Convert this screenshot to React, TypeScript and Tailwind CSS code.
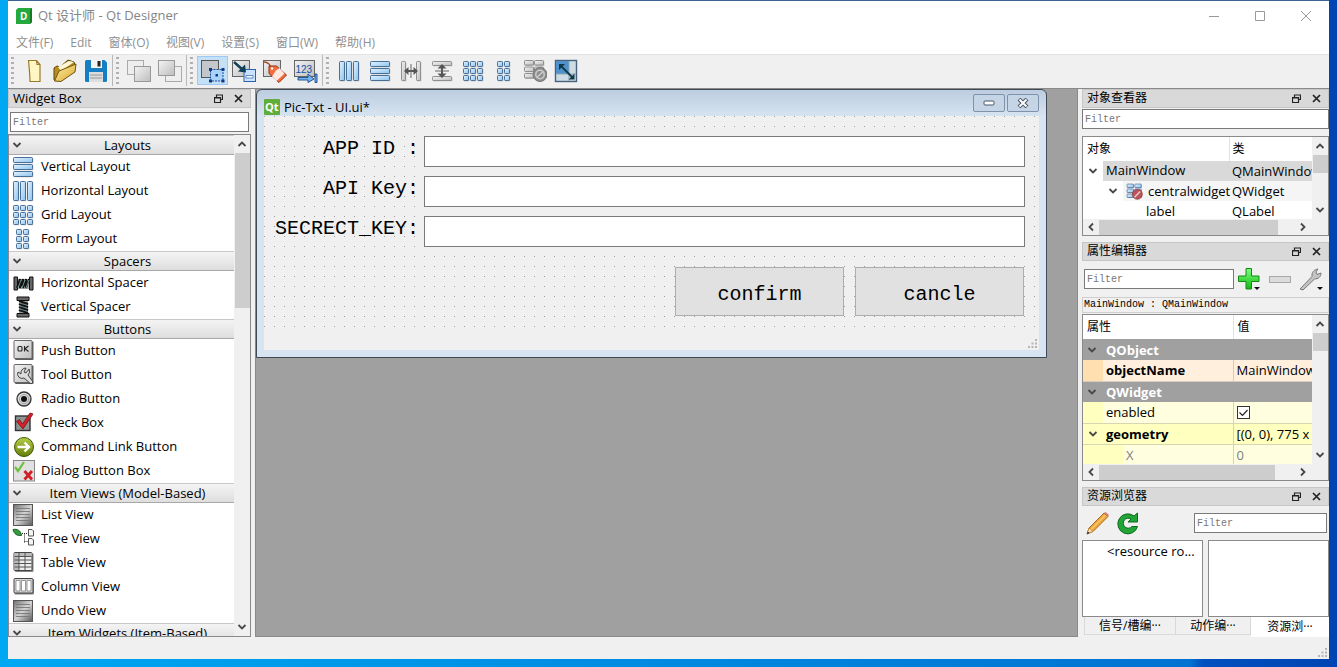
import React from "react";

const UI = "font-['Open_Sans','Noto_Sans_CJK_SC',sans-serif]";
const MONO = "font-['Liberation_Mono','Noto_Sans_CJK_SC',monospace]";

type Kids = { children?: React.ReactNode };

/* ---------- shared icons ---------- */

function Defs() {
  return (
    <svg className="absolute size-0" aria-hidden="true">
      <defs>
        <linearGradient id="bar" x1="0" y1="0" x2="1" y2="1">
          <stop offset="0" stopColor="#e4f3ff" />
          <stop offset="1" stopColor="#8cc3ee" />
        </linearGradient>
        <linearGradient id="gry" x1="0" y1="0" x2="1" y2="1">
          <stop offset="0" stopColor="#f4f4f4" />
          <stop offset="1" stopColor="#bdbdbd" />
        </linearGradient>
        <linearGradient id="gold" x1="0" y1="0" x2="1" y2="1">
          <stop offset="0" stopColor="#fff0a8" />
          <stop offset="1" stopColor="#d9a72c" />
        </linearGradient>
        <linearGradient id="grn" x1="0" y1="0" x2="0" y2="1">
          <stop offset="0" stopColor="#7dff7d" />
          <stop offset="1" stopColor="#14b814" />
        </linearGradient>
        <linearGradient id="olive" x1="0" y1="0" x2="0" y2="1">
          <stop offset="0" stopColor="#b5cf4a" />
          <stop offset="1" stopColor="#647f08" />
        </linearGradient>
        <linearGradient id="dark" x1="0" y1="0" x2="1" y2="1">
          <stop offset="0" stopColor="#6e6e6e" />
          <stop offset="0.5" stopColor="#d5d5d5" />
          <stop offset="1" stopColor="#5a5a5a" />
        </linearGradient>
      </defs>
    </svg>
  );
}

function Icon({ children, size = "size-6" }: Kids & { size?: string }) {
  return (
    <svg viewBox="0 0 24 24" className={`${size} shrink-0`} aria-hidden="true">
      {children}
    </svg>
  );
}

type CellProps = { xs: number[]; ys: number[]; w: number; h: number; gray?: boolean };

function Cells({ xs, ys, w, h, gray }: CellProps) {
  return (
    <g>
      {xs.map((x) =>
        ys.map((y) => (
          <g key={`${x}-${y}`}>
            <rect x={x + 0.7} y={y + 0.7} width={w} height={h} fill="#000" opacity="0.3" />
            <rect x={x} y={y} width={w} height={h} rx="0.8" fill={gray ? "url(#gry)" : "url(#bar)"} stroke={gray ? "#8f8f8f" : "#4a6f96"} />
          </g>
        )),
      )}
    </g>
  );
}

const rows = <Cells xs={[2.5]} ys={[2.5, 9.5, 16.5]} w={19} h={5} />;
const cols = <Cells xs={[2.5, 9.5, 16.5]} ys={[2.5]} w={5} h={19} />;
const grid = <Cells xs={[2.5, 9.5, 16.5]} ys={[2.5, 9.5, 16.5]} w={5} h={5} />;
const formCells = <Cells xs={[5.5, 12.5]} ys={[2.5, 9.5, 16.5]} w={5} h={5} />;

const hSpacer = (
  <g>
    <path d="M6 8h13v10H6z" fill="#444" opacity="0.5" />
    <path d="M3 6h3.500v13H3zM18.500 6H22v13h-3.500z" fill="#666" stroke="#111" />
    <path d="M6 17l3-9v9l3-9v9l3-9v9l3-9" fill="none" stroke="#111" strokeWidth="2" />
    <path d="M7 17l3-8M11 17l3-8M15 17l3-8" stroke="#9ac4c4" strokeWidth="0.7" />
  </g>
);
const vSpacer = (
  <g>
    <path d="M8 6h9v12H8z" fill="#444" opacity="0.5" />
    <path d="M6 2h12v3.500H6zM6 18.500h12V22H6z" fill="#666" stroke="#111" />
    <path d="M8 6l9 3H8l9 3H8l9 3H8l9 3" fill="none" stroke="#111" strokeWidth="2" />
    <path d="M8 8l8 2M8 11l8 2M8 14l8 2" stroke="#9ac4c4" strokeWidth="0.7" />
  </g>
);
const plate = (
  <g>
    <rect x="4" y="2.500" width="18.500" height="18.500" rx="1" fill="#333" opacity="0.8" />
    <rect x="3" y="1.500" width="18" height="18" rx="1" fill="url(#gry)" stroke="#666" />
  </g>
);
const pushIcon = (
  <g>
    {plate}
    <rect x="7" y="7.500" width="4" height="4.500" rx="1" fill="none" stroke="#222" strokeWidth="1.100" />
    <path d="M13.500 7v5.500M17.500 7l-3.500 2.700 3.500 2.800" fill="none" stroke="#222" strokeWidth="1.100" />
  </g>
);
const toolIcon = (
  <g>
    {plate}
    <path d="M15 5a5 5 0 0 0-5 6L7 9a4.500 4.500 0 0 0 6 6l7 6 2-2-5-7a5 5 0 0 0 1-6l-3 4-2-1z" fill="#ddd" stroke="#444" />
  </g>
);
const radioIcon = (
  <g>
    <circle cx="13" cy="12" r="7" fill="url(#gry)" stroke="#333" strokeWidth="1.300" />
    <circle cx="13" cy="12" r="4.600" fill="#ddd" stroke="#777" strokeWidth="0.600" />
    <circle cx="13" cy="12" r="3" fill="#111" />
  </g>
);
const checkIcon = (
  <g>
    <rect x="4.500" y="5" width="14.500" height="14.500" fill="#8b9694" stroke="#333" strokeWidth="1.400" />
    <path d="M5.500 10.500l3-2 3 4.500L19 2l3 1L12 18z" fill="#d3222a" stroke="#7d0c12" strokeWidth="0.800" />
  </g>
);
const linkIcon = (
  <g>
    <circle cx="13" cy="12" r="9.500" fill="url(#olive)" stroke="#435806" />
    <path d="M6.500 12h11M13.500 7.500L18 12l-4.500 4.500" fill="none" stroke="#fff" strokeWidth="2.400" />
  </g>
);
const dialogIcon = (
  <g>
    <rect x="2.500" y="1.500" width="21" height="20.500" fill="#e0e0e0" stroke="#888" />
    <path d="M4 8l3 4 6-9" fill="none" stroke="#6cc03a" strokeWidth="2.200" />
    <path d="M13.500 12l7.500 8.500M21 12l-7.500 8.500" stroke="#d01f28" strokeWidth="2.800" />
  </g>
);
const listIcon = (
  <g>
    <rect x="2.500" y="1.500" width="19" height="21" fill="url(#dark)" stroke="#555" />
    <path d="M5 5.500h14M5 8.500h14M5 11.500h14M5 14.500h14M5 17.500h14" stroke="#777" strokeWidth="0.900" />
  </g>
);
const treeIcon = (
  <g>
    <path d="M2 2.500c4-1 8 1 8.500 6C6 9 3 7 2 2.500z" fill="#2f9e3d" stroke="#123f18" strokeWidth="0.800" />
    <path d="M11 6.500h6M13.500 6.500v9M13.500 14.500h3" stroke="#222" strokeDasharray="1 1" fill="none" />
    <path d="M17.500 2.500h3.500l1.500 1.500v5h-5zM17.500 11.500h3.500l1.500 1.500v5h-5z" fill="#f4f4f4" stroke="#555" />
  </g>
);
const tableIcon = (
  <g>
    <rect x="4" y="2.500" width="18.500" height="18.500" rx="1" fill="#333" opacity="0.600" />
    <rect x="3" y="1.500" width="18" height="18" rx="1" fill="#eee" stroke="#444" />
    <path d="M3.500 2h17v3.500h-17zM3.500 2H8v17H3.500z" fill="#bbb" />
    <path d="M3.500 5.500h17M3.500 9h17M3.500 12.500h17M3.500 16h17M8 2v17M14 2v17" stroke="#555" />
  </g>
);
const columnIcon = (
  <g>
    <rect x="3.500" y="4" width="19.500" height="15.500" rx="1" fill="#333" opacity="0.600" />
    <rect x="3" y="3.500" width="19" height="14.500" rx="1" fill="#d8d8d8" stroke="#444" />
    <path d="M5 5.500h4v10.500H5zM10.500 5.500h4v10.500h-4zM16 5.500h4v10.500h-4z" fill="#fff" stroke="#777" strokeWidth="0.700" />
  </g>
);

const newIcon = (
  <path d="M6.500 1.500h8l3.500 4v17H8c0-6-.8-14-1.500-21zM14.500 1.500l.5 4h3" fill="#fff6c4" stroke="#9a7a28" strokeWidth="1.200" />
);
const openIcon = (
  <g>
    <path d="M1 21V9l3-2 3 1 8-7 6 2 1 3L3 22z" fill="#b98d1c" stroke="#5e4708" />
    <path d="M5 8l11-6 5 1-13 9z" fill="#fdf6d8" />
    <path d="M1.500 22L6 12 23 5l-1 8L8 22.500z" fill="url(#gold)" stroke="#6d5410" />
  </g>
);
const saveIcon = (
  <g>
    <path d="M1 2.500Q1 1 2.500 1h18L23 3.500v18q0 1.500-1.500 1.500h-19Q1 23 1 21.500z" fill="#167fc4" />
    <path d="M7 1h11v8H7z" fill="#f3f3f3" />
    <path d="M13.500 2h3v5.500h-3z" fill="#222" />
    <path d="M5 13h14v10H5z" fill="#ddd" />
    <path d="M6 16h12M6 19h12" stroke="#999" />
  </g>
);
const backIcon = (
  <g>
    <rect x="0.500" y="1.500" width="16" height="14" fill="#eee" stroke="#aaa" />
    <rect x="7.500" y="7.500" width="16" height="15" fill="url(#gry)" stroke="#999" />
  </g>
);
const frontIcon = (
  <g>
    <rect x="7.500" y="7.500" width="16" height="15" fill="#eee" stroke="#aaa" />
    <rect x="0.500" y="1.500" width="16" height="15" fill="url(#gry)" stroke="#999" />
  </g>
);
const widgetsIcon = (
  <g>
    <rect x="0.500" y="1.500" width="17" height="17" fill="#c3c7cc" stroke="#555" />
    <path d="M9.500 10.500H22V22H9.500z" fill="#a9d2fa" stroke="#174e9b" strokeDasharray="2 1" />
    <path d="M8 9h3v3H8zM20.500 9h3v3h-3zM8 20.500h3v3H8zM20.500 20.500h3v3h-3zM14.500 15H17v2.500h-2.500z" fill="#123a80" />
  </g>
);
const signalsIcon = (
  <g>
    <rect x="0.500" y="1.500" width="17" height="16" fill="url(#gry)" stroke="#666" />
    <rect x="12" y="10.500" width="11.500" height="12" fill="#c7e3ff" stroke="#2c63a8" />
    <path d="M14 16.500h7V19h-7z" fill="#fff" stroke="#2c63a8" strokeWidth="0.700" />
    <path d="M2 3l9 8" stroke="#123f58" strokeWidth="2.400" />
    <path d="M14 13.500l-8-1 7-7z" fill="#123f58" />
  </g>
);
const buddyIcon = (
  <g>
    <rect x="0.500" y="1.500" width="17" height="16" fill="url(#gry)" stroke="#666" />
    <path d="M1 3q6 0 7 7" fill="none" stroke="#a34b21" strokeWidth="1.300" />
    <path d="M6 7h7.500l10 9-7.500 7.500L6 14.500z" fill="#f36d3d" stroke="#8f3110" />
    <path d="M13 11.500l3.500-2.500 5 5.500-8 7.500-4.500-4.500z" fill="#fff" opacity="0.850" />
    <circle cx="9" cy="9.500" r="1.200" fill="#fff" />
  </g>
);
const tabOrderIcon = (
  <g>
    <rect x="0.500" y="1.500" width="20" height="16" fill="url(#gry)" stroke="#666" />
    <text x="1.500" y="14" fontSize="10" fill="#174ea6" fontFamily="Liberation Sans, sans-serif">123</text>
    <path d="M4 18.500h10v-3.500l6 5-6 3.500v-2.500H4zM21 15h2v8.500h-2z" fill="#74b7ef" stroke="#16468c" strokeWidth="0.900" />
  </g>
);
const hSplitIcon = (
  <g>
    <Cells gray xs={[2.5, 17.5]} ys={[2.5]} w={4} h={19} />
    <path d="M5 12l4.500-4v3h5V8l4.500 4-4.500 4v-3h-5v3z" fill="#555" />
    <path d="M12 5v14" stroke="#666" />
  </g>
);
const vSplitIcon = (
  <g>
    <Cells gray xs={[2.5]} ys={[2.5, 17.5]} w={19} h={4} />
    <path d="M12 5l4.500 4.500H13v5h3.500L12 19l-4.500-4.500H11v-5H7.500z" fill="#555" />
    <path d="M5 12h14" stroke="#666" />
  </g>
);
const breakIcon = (
  <g>
    <Cells gray xs={[1.5, 11.5]} ys={[1.5, 8, 14.5]} w={9} h={4.5} />
    <circle cx="17" cy="15.500" r="7" fill="#8e8e8e" stroke="#777" />
    <circle cx="17" cy="15.500" r="4.200" fill="none" stroke="#ccc" strokeWidth="1.500" />
    <path d="M14 18.500l6-6" stroke="#ccc" strokeWidth="1.500" />
  </g>
);
const adjustIcon = (
  <g>
    <rect x="1.500" y="1.500" width="21" height="21" fill="#ccdbe4" stroke="#46627c" strokeWidth="1.400" />
    <path d="M2 2h13v13H2z" fill="#4e91cb" />
    <path d="M15 2v20M2 15h20" stroke="#8fa5b5" />
    <path d="M7 7l11 11" stroke="#0e3a4a" strokeWidth="1.800" />
    <path d="M5 5h6l-6 6zM20.500 20.500h-6l6-6z" fill="#0e3a4a" />
  </g>
);

function Chevron({ dir, className = "" }: { dir: "up" | "down" | "left" | "right"; className?: string }) {
  const d = {
    up: "M1.500 7l3.500-3.500L8.500 7",
    down: "M1.500 3l3.500 3.500L8.500 3",
    left: "M7 1.500L3.500 5 7 8.500",
    right: "M3 1.500L6.500 5 3 8.500",
  }[dir];
  return (
    <svg viewBox="0 0 10 10" className={`size-2.5 shrink-0 ${className}`} aria-hidden="true">
      <path d={d} fill="none" stroke="#484848" strokeWidth="1.800" />
    </svg>
  );
}

/* ---------- shared parts ---------- */

function DockTitle({ children, size = "text-[12px]" }: Kids & { size?: string }) {
  return (
    <div className={`flex h-[19px] shrink-0 items-center border border-[#c6c6c6] bg-[#d9d9d9] px-1 pb-px leading-4 text-black ${size}`}>
      <h2 className="flex-1 truncate">{children}</h2>
      <button aria-label="Float" className="flex size-4 items-center justify-center">
        <svg viewBox="0 0 9 9" className="size-[9px]" aria-hidden="true">
          <path d="M2.500 3V1h6v4.500H6.500M.5 3.500h6v5h-6zM.5 4h6M2.500 1h6" fill="none" stroke="#222" strokeWidth="1.200" />
        </svg>
      </button>
      <button aria-label="Close" className="ml-1 flex size-4 items-center justify-center">
        <svg viewBox="0 0 9 9" className="size-[9px]" aria-hidden="true">
          <path d="M1 1l7 7M8 1L1 8" stroke="#222" strokeWidth="1.700" />
        </svg>
      </button>
    </div>
  );
}

function Filter({ label, className = "" }: { label: string; className?: string }) {
  return (
    <input
      aria-label={label}
      placeholder="Filter"
      className={`h-5 min-w-0 border border-[#7a7a7a] bg-white px-0.5 text-[10px] leading-4 outline-none placeholder:text-[#777] ${MONO} ${className}`}
    />
  );
}

function VScroll({ thumb }: { thumb: string }) {
  return (
    <div className="flex w-4 shrink-0 flex-col items-center bg-[#f0f0f0]">
      <Chevron dir="up" className="my-1" />
      <div className={`w-[15px] bg-[#cdcdcd] ${thumb}`} />
      <Chevron dir="down" className="mb-1 mt-auto" />
    </div>
  );
}

function HScroll({ thumb }: { thumb: string }) {
  return (
    <div className="flex h-4 shrink-0 items-center bg-[#f0f0f0] pr-5">
      <Chevron dir="left" className="mx-[3px]" />
      <div className={`h-[15px] bg-[#cdcdcd] ${thumb}`} />
      <Chevron dir="right" className="ml-auto" />
    </div>
  );
}

/* ---------- header ---------- */

function TitleBar() {
  return (
    <header className="flex h-[30px] shrink-0 items-center bg-white pl-2 text-[13px] text-[#868686]">
      <svg viewBox="0 0 16 16" className="mr-1.5 size-4" aria-hidden="true">
        <path d="M2 0h14v14l-2 2H0V2z" fill="#25a83c" />
        <path d="M14 2l2-2v14l-2 2z" fill="#157a28" />
        <text x="4" y="12" fontSize="10" fontWeight="700" fill="#fff" fontFamily="Noto Sans, sans-serif">D</text>
      </svg>
      <h1 className="flex-1">Qt 设计师 - Qt Designer</h1>
      <button aria-label="Minimize" className="flex h-full w-[46px] items-center justify-center">
        <svg viewBox="0 0 12 12" className="size-3" aria-hidden="true"><path d="M1 6.500h10" stroke="#999" /></svg>
      </button>
      <button aria-label="Maximize" className="flex h-full w-[46px] items-center justify-center">
        <svg viewBox="0 0 12 12" className="size-3" aria-hidden="true"><path d="M1.500 1.500h9v9h-9z" fill="none" stroke="#999" /></svg>
      </button>
      <button aria-label="Close window" className="flex h-full w-[46px] items-center justify-center">
        <svg viewBox="0 0 12 12" className="size-3" aria-hidden="true"><path d="M1 1l10 10M11 1L1 11" stroke="#999" /></svg>
      </button>
    </header>
  );
}

const menus = ["文件(F)", "Edit", "窗体(O)", "视图(V)", "设置(S)", "窗口(W)", "帮助(H)"];

function Grip() {
  return <span className="ml-[3px] mr-1 h-7 w-[3px] bg-[linear-gradient(#b0b0b0_2px,transparent_2px)] bg-[length:3px_5px]" />;
}

const toolGroups = [
  [
    { name: "New", icon: newIcon },
    { name: "Open", icon: openIcon },
    { name: "Save", icon: saveIcon },
  ],
  [
    { name: "Send to Back", icon: backIcon },
    { name: "Bring to Front", icon: frontIcon },
  ],
  [
    { name: "Edit Widgets", icon: widgetsIcon, active: true },
    { name: "Edit Signals/Slots", icon: signalsIcon },
    { name: "Edit Buddies", icon: buddyIcon },
    { name: "Edit Tab Order", icon: tabOrderIcon },
  ],
  [
    { name: "Lay Out Horizontally", icon: cols },
    { name: "Lay Out Vertically", icon: rows },
    { name: "Horizontal Splitter", icon: hSplitIcon },
    { name: "Vertical Splitter", icon: vSplitIcon },
    { name: "Grid", icon: grid },
    { name: "Form", icon: formCells },
    { name: "Break Layout", icon: breakIcon },
    { name: "Adjust Size", icon: adjustIcon },
  ],
];

function ToolBar() {
  return (
    <div className="flex h-[34px] shrink-0 items-center border-t border-[#e3e3e3] bg-[#f0f0f0] pb-0.5">
      {toolGroups.map((group) => (
        <div key={group[0].name} className="flex h-[31px] items-center border-r border-[#b8b8b8] pr-px last:border-r-0">
          <Grip />
          {group.map((tool) => (
            <button
              key={tool.name}
              aria-label={tool.name}
              className={`flex h-[29px] w-[31px] items-center justify-center border ${
                "active" in tool ? "border-[#9ccaf2] bg-[#c4e0f7]" : "border-transparent"
              }`}
            >
              <Icon>{tool.icon}</Icon>
            </button>
          ))}
        </div>
      ))}
    </div>
  );
}

/* ---------- widget box ---------- */

const sections = [
  {
    title: "Layouts",
    items: [
      { name: "Vertical Layout", icon: rows },
      { name: "Horizontal Layout", icon: cols },
      { name: "Grid Layout", icon: grid },
      { name: "Form Layout", icon: formCells },
    ],
  },
  {
    title: "Spacers",
    items: [
      { name: "Horizontal Spacer", icon: hSpacer },
      { name: "Vertical Spacer", icon: vSpacer },
    ],
  },
  {
    title: "Buttons",
    items: [
      { name: "Push Button", icon: pushIcon },
      { name: "Tool Button", icon: toolIcon },
      { name: "Radio Button", icon: radioIcon },
      { name: "Check Box", icon: checkIcon },
      { name: "Command Link Button", icon: linkIcon },
      { name: "Dialog Button Box", icon: dialogIcon },
    ],
  },
  {
    title: "Item Views (Model-Based)",
    items: [
      { name: "List View", icon: listIcon },
      { name: "Tree View", icon: treeIcon },
      { name: "Table View", icon: tableIcon },
      { name: "Column View", icon: columnIcon },
      { name: "Undo View", icon: listIcon },
    ],
  },
  { title: "Item Widgets (Item-Based)", items: [] },
];

function WidgetBox() {
  return (
    <aside className="flex w-[243px] shrink-0 flex-col">
      <DockTitle size="text-[13px]">Widget Box</DockTitle>
      <Filter label="Filter widgets" className="mx-0.5 mt-1" />
      <div className="mt-0.5 flex min-h-0 flex-1 border border-[#8a8a8a] bg-white">
        <div className="min-w-0 flex-1 overflow-hidden">
          {sections.map((section) => (
            <section key={section.title}>
              <button className="flex h-5 w-full items-center border-b border-t border-[#a8a8a8] border-t-[#c8c8c8] bg-linear-to-b from-[#f4f4f4] to-[#dedede] px-[3px] text-[13px] leading-4">
                <Chevron dir="down" />
                <span className="flex-1 pl-0.5 text-center">{section.title}</span>
              </button>
              <ul>
                {section.items.map((item) => (
                  <li key={item.name} className="flex h-6 items-center gap-1.5 pl-0.5 text-[13px]">
                    <Icon>{item.icon}</Icon>
                    {item.name}
                  </li>
                ))}
              </ul>
            </section>
          ))}
        </div>
        <VScroll thumb="h-[155px]" />
      </div>
    </aside>
  );
}

/* ---------- form being designed ---------- */

const fields = [
  { id: "app-id", label: "APP ID :" },
  { id: "api-key", label: "API Key:" },
  { id: "secret-key", label: "SECRECT_KEY:" },
];

function SizeGrip() {
  return (
    <svg viewBox="0 0 9 9" className="size-[9px]" aria-hidden="true">
      <path d="M7 0h2v2H7zM7 3.500h2v2H7zM7 7h2v2H7zM3.500 3.500h2v2h-2zM3.500 7h2v2h-2zM0 7h2v2H0z" fill="#b5b5b5" />
    </svg>
  );
}

function FormWindow() {
  return (
    <section className="w-[791px] max-w-full rounded-t-md border border-[#3f4a55] bg-linear-to-b from-[#bccddf] via-[#d7e4f2] via-10% to-[#d7e4f2] px-[7px] pb-[7px]">
      <div className="flex h-[26px] items-center gap-1 text-[13px]">
        <svg viewBox="0 0 16 16" className="mt-[7px] size-4" aria-hidden="true">
          <rect width="16" height="16" rx="1" fill="#5fae3b" />
          <text x="1" y="12" fontSize="11" fontWeight="700" fill="#fff" fontFamily="Open Sans, sans-serif">Qt</text>
        </svg>
        <h2 className="mt-2 flex-1 leading-4">Pic-Txt - UI.ui*</h2>
        <button aria-label="Minimize form" className="flex h-[18px] w-8 items-center justify-center rounded-xs border border-[#7e93ab] bg-[#c6d5e6]">
          <svg viewBox="0 0 12 6" className="h-1.5 w-3" aria-hidden="true"><rect x="1" y="1" width="10" height="4" rx="1" fill="#fff" stroke="#4b5668" /></svg>
        </button>
        <button aria-label="Close form" className="-ml-0.5 flex h-[18px] w-8 items-center justify-center rounded-xs border border-[#7e93ab] bg-[#c6d5e6]">
          <svg viewBox="0 0 12 10" className="h-2.5 w-3" aria-hidden="true">
            <path d="M2 1l8 8M10 1L2 9" stroke="#4b5668" strokeWidth="4" />
            <path d="M2.500 1.500l7 7M9.500 1.500l-7 7" stroke="#fff" strokeWidth="2" />
          </svg>
        </button>
      </div>
      <form className="bg-[#f0f0f0]" onSubmit={(e) => e.preventDefault()}>
        <div className={`bg-[#9c9c9c] bg-[linear-gradient(90deg,transparent_1px,#f0f0f0_1px),linear-gradient(transparent_1px,#f0f0f0_1px)] bg-[length:10px_10px] pb-[14px] pr-3.5 pt-5 ${MONO}`}>
          <div className="flex flex-col gap-[9px]">
            {fields.map((field) => (
              <div key={field.id} className="flex">
                <label htmlFor={field.id} className="w-[155px] text-right text-[20px] leading-[26px]">{field.label}</label>
                <input id={field.id} className="ml-[5px] h-[31px] min-w-0 flex-1 border border-[#7a7a7a] bg-white px-1 text-[20px] outline-none" />
              </div>
            ))}
          </div>
          <div className="mt-5 flex justify-end gap-[11px] pr-px">
            {["confirm", "cancle"].map((name) => (
              <button key={name} className="h-[49px] w-[169px] border border-[#adadad] bg-[#e1e1e1] pt-1.5 text-[20px]">
                {name}
              </button>
            ))}
          </div>
        </div>
        <div className="flex h-5 items-end justify-end p-0.5">
          <SizeGrip />
        </div>
      </form>
    </section>
  );
}

/* ---------- right docks ---------- */

function ObjectInspector() {
  return (
    <section className="flex flex-col">
      <DockTitle>对象查看器</DockTitle>
      <Filter label="Filter objects" className="mt-px" />
      <div className="mt-[7px] h-[100px] border border-[#8a8a8a] bg-white">
        <div className="flex h-[82px]">
          <div className="min-w-0 flex-1 overflow-hidden">
            <table className="w-full table-fixed whitespace-nowrap text-left text-[13px] leading-4">
              <thead>
                <tr className="h-6 text-[12px]">
                  <th className="w-[146px] border-r border-[#e2e2e2] pl-1 font-normal">对象</th>
                  <th className="pl-[3px] font-normal">类</th>
                </tr>
              </thead>
              <tbody>
                <tr className="h-5">
                  <td><div className="flex h-5 items-center"><Chevron dir="down" className="mx-[5px]" /><span className="h-5 flex-1 bg-[#d9d9d9] pl-[3px] pt-px">MainWindow</span></div></td>
                  <td className="bg-[#d9d9d9] pl-[3px]">QMainWindow</td>
                </tr>
                <tr className="h-5">
                  <td>
                    <div className="flex h-5 items-center pl-5">
                      <Chevron dir="down" className="mx-[5px]" />
                      <span className="flex h-5 flex-1 items-center gap-[5px] bg-[#f5f5f5] pl-[3px]">
                        <Icon size="size-[17px]">
                          <Cells xs={[1.5, 12.5]} ys={[1.5, 8.5, 15.5]} w={9} h={5} />
                          <circle cx="16" cy="16" r="7" fill="#b8545c" stroke="#8e3038" />
                          <path d="M12 20l8-8" stroke="#f3c8cc" strokeWidth="2" />
                        </Icon>
                        centralwidget
                      </span>
                    </div>
                  </td>
                  <td className="bg-[#f5f5f5] pl-[3px]">QWidget</td>
                </tr>
                <tr className="h-5">
                  <td className="pl-[63px]">label</td>
                  <td className="pl-[3px]">QLabel</td>
                </tr>
              </tbody>
            </table>
          </div>
          <VScroll thumb="h-[18px]" />
        </div>
        <HScroll thumb="w-[179px]" />
      </div>
    </section>
  );
}

function GroupRow({ children }: Kids) {
  return (
    <tr className="h-[21px] bg-[#a0a0a0] font-bold text-white">
      <td colSpan={2}>
        <div className="flex items-center gap-[9px] pl-1"><Chevron dir="down" />{children}</div>
      </td>
    </tr>
  );
}

function PropertyEditor() {
  return (
    <section className="mt-1.5 flex flex-col">
      <DockTitle>属性编辑器</DockTitle>
      <div className="flex h-9 items-center pl-0.5">
        <Filter label="Filter properties" className="w-[150px]" />
        <button aria-label="Add property" className="ml-[3px] size-6">
          <Icon>
            <path d="M9 1.500h5.500V9H22v5.500h-7.500V22H9v-7.500H1.500V9H9z" fill="url(#grn)" stroke="#128a12" />
            <path d="M17 20h6l-3 3z" fill="#111" />
          </Icon>
        </button>
        <button aria-label="Remove property" className="ml-2 h-[7px] w-[22px] border border-[#a8a8a8] bg-[#dcdcdc]" />
        <button aria-label="Configure" className="ml-2 size-6">
          <Icon>
            <path d="M1 22L13 9.500c-.5-4 2-7 6-7.500L17 5l1 2.500 4-1.500c0 4-3 6-6.500 6L4 23z" fill="#c4c4c4" stroke="#777" />
            <path d="M18 20h6l-3 3z" fill="#111" />
          </Icon>
        </button>
      </div>
      <p className={`h-4 border border-[#cfcfcf] px-px text-[10px] leading-3.5 text-black ${MONO}`}>MainWindow : QMainWindow</p>
      <div className="mt-px h-[167px] border border-[#8a8a8a] bg-white">
        <div className="flex h-[149px]">
          <div className="min-w-0 flex-1 overflow-hidden">
            <table className="w-full table-fixed whitespace-nowrap text-left text-[13px] leading-4">
              <thead>
                <tr className="h-6 text-[12px]">
                  <th className="w-[150px] border-r border-[#e2e2e2] pl-1 font-normal">属性</th>
                  <th className="pl-1 font-normal">值</th>
                </tr>
              </thead>
              <tbody>
                <GroupRow>QObject</GroupRow>
                <tr className="h-[21px] border-b border-[#d8cdbc] bg-[#ffefdc]">
                  <td className="border-r border-[#d8cdbc] bg-[linear-gradient(90deg,#ffdfb0_20px,transparent_20px)] pl-[23px] font-bold">objectName</td>
                  <td className="pl-[3px]">MainWindow</td>
                </tr>
                <GroupRow>QWidget</GroupRow>
                <tr className="h-[21px] border-b border-[#d6d6b0] bg-[#ffffdf]">
                  <td className="border-r border-[#d6d6b0] bg-[linear-gradient(90deg,#ffffbf_20px,transparent_20px)] pl-[23px]"><label htmlFor="enabled">enabled</label></td>
                  <td className="pl-[3px]">
                    <span className="relative block size-[13px]">
                      <input id="enabled" type="checkbox" defaultChecked className="peer block size-[13px] appearance-none border border-[#333] bg-white" />
                      <svg viewBox="0 0 13 13" className="pointer-events-none absolute inset-0 hidden size-[13px] peer-checked:block" aria-hidden="true">
                        <path d="M2.500 6.500l3 3L10.500 4" fill="none" stroke="#222" strokeWidth="1.200" />
                      </svg>
                    </span>
                  </td>
                </tr>
                <tr className="h-[21px] border-b border-[#d6d6b0] bg-[#ffffbf]">
                  <td className="border-r border-[#d6d6b0] font-bold"><div className="flex items-center gap-2 pl-[5px]"><Chevron dir="down" />geometry</div></td>
                  <td className="pl-[3px]">[(0, 0), 775 x</td>
                </tr>
                <tr className="h-[21px] bg-[#ffffdf] text-[#808080]">
                  <td className="border-r border-[#d6d6b0] bg-[linear-gradient(90deg,#ffffbf_40px,transparent_40px)] pl-[43px]">X</td>
                  <td className="pl-[3px]">0</td>
                </tr>
              </tbody>
            </table>
          </div>
          <VScroll thumb="h-[18px]" />
        </div>
        <HScroll thumb="w-[176px]" />
      </div>
    </section>
  );
}

function ResourceBrowser() {
  return (
    <section className="mt-1.5 flex min-h-0 flex-1 flex-col">
      <DockTitle>资源浏览器</DockTitle>
      <div className="flex h-[34px] items-center pl-1 pr-0.5">
        <button aria-label="Edit resources" className="size-6">
          <Icon>
            <path d="M1 23l2-6L18 2l4 3.500L7 20.500z" fill="#f0a93a" stroke="#a8691a" />
            <path d="M1 23l2-6 4 3.500z" fill="#f5dcb4" stroke="#a8691a" strokeWidth="0.500" />
            <path d="M1 23l.8-2.500 1.700 1.500z" fill="#222" />
            <path d="M18 2l4 3.500 1-1.500-3.500-3z" fill="#d97a7a" />
            <path d="M5 18.500L19.500 4" stroke="#ffe0a0" />
          </Icon>
        </button>
        <button aria-label="Reload" className="ml-1.5 size-6">
          <Icon>
            <path d="M18 5l3.500-3V11H12l3-3a5 5 0 1 0 1 7.500h5.500A10 10 0 1 1 18 5z" fill="#22a436" stroke="#0c6a1b" />
          </Icon>
        </button>
        <Filter label="Filter resources" className="ml-auto w-[133px]" />
      </div>
      <div className="flex min-h-0 flex-1 gap-[5px]">
        <div className="w-[121px] truncate border border-[#8a8a8a] bg-white pl-6 pt-0.5 text-[13px] leading-4">&lt;resource ro...</div>
        <div className="flex-1 border border-[#8a8a8a] bg-white" />
      </div>
      <div role="tablist" className="flex h-5 shrink-0 text-[12px] leading-4 text-black">
        <button role="tab" aria-selected="false" className="ml-0.5 h-[18px] w-[92px] border border-t-0 border-[#d9d9d9]">信号/槽编···</button>
        <button role="tab" aria-selected="false" className="h-[18px] w-[75px] border border-l-0 border-t-0 border-[#d9d9d9]">动作编···</button>
        <button role="tab" aria-selected="true" className="h-5 flex-1 bg-white">资源浏···</button>
      </div>
    </section>
  );
}

export default function App() {
  return (
    <div className={`flex h-screen flex-col bg-[linear-gradient(90deg,#00a8f3,#0083dd_60%,#0072d2_89%,#0050bd_90%,#0044b4)] px-2 pb-2 text-black ${UI}`}>
      <Defs />
      <div className="flex min-h-0 flex-1 flex-col border-t border-[#3d6590] bg-[#f0f0f0]">
        <TitleBar />
        <nav className="flex h-[23px] shrink-0 items-center gap-[17px] bg-white pl-2 text-[12px] text-[#8f8f8f]">
          {menus.map((menu) => (
            <button key={menu}>{menu}</button>
          ))}
        </nav>
        <ToolBar />
        <main className="flex min-h-0 flex-1 gap-1 border-t border-[#8a8a8a]">
          <WidgetBox />
          <div className="min-w-0 flex-1 overflow-hidden border border-t-0 border-[#8a8a8a] bg-[#a0a0a0]">
            <FormWindow />
          </div>
          <aside className="flex w-[247px] shrink-0 flex-col">
            <ObjectInspector />
            <PropertyEditor />
            <ResourceBrowser />
          </aside>
        </main>
        <footer className="flex h-[22px] shrink-0 items-end justify-end p-0.5">
          <SizeGrip />
        </footer>
      </div>
    </div>
  );
}
